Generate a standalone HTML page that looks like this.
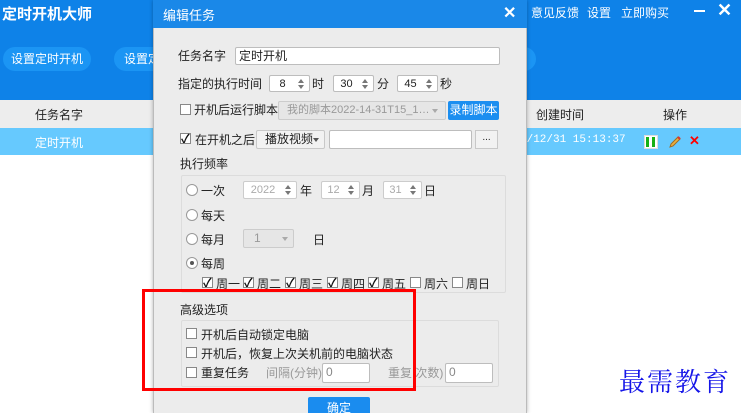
<!DOCTYPE html>
<html><head><meta charset="utf-8"><style>
*{margin:0;padding:0;box-sizing:border-box}
html,body{width:741px;height:413px;overflow:hidden}
body{position:relative;background:#fff;font-family:"Liberation Sans","Noto Sans CJK SC",sans-serif;font-size:12px;color:#222}
.a{position:absolute;white-space:nowrap}
.w{color:#fff}
.inp{position:absolute;background:#fff;border:1px solid #bdbdbd;border-radius:2px;font-size:12px;line-height:16px;padding-left:3px}
.spin{position:absolute;background:#fff;border:1px solid #bdbdbd;border-radius:2px;font-size:11px;text-align:center;line-height:16px}
.spin.d{color:#aaa;border-color:#ccc}
.spin:after{content:"";position:absolute;right:5px;top:3px;width:0;height:0;border-left:3px solid transparent;border-right:3px solid transparent;border-bottom:4px solid #777}
.spin:before{content:"";position:absolute;right:5px;top:9px;width:0;height:0;border-left:3px solid transparent;border-right:3px solid transparent;border-top:4px solid #777}
.cb{position:absolute;width:11px;height:11px;border:1px solid #888;background:#fff}
.cb.k:after{content:"✓";position:absolute;left:0;top:-4px;font-size:12px;font-weight:bold;color:#111}
.rd{position:absolute;width:12px;height:12px;border:1px solid #999;border-radius:50%;background:#fff}
.rd.k:after{content:"";position:absolute;left:3px;top:3px;width:4px;height:4px;border-radius:50%;background:#555}
.grp{position:absolute;border:1px solid #dcdcdc;border-radius:2px}
</style></head><body>
<div class="a" style="left:0;top:0;width:741px;height:100px;background:#0e82e8"></div>
<div class="a w" style="left:2px;top:3px;font-size:15px;font-weight:bold">定时开机大师</div>
<div class="a" style="left:3px;top:47px;width:88px;height:24px;border-radius:12px;background:#1b95f4;color:#fff;text-align:center;line-height:24px">设置定时开机</div>
<div class="a" style="left:114px;top:47px;width:88px;height:24px;border-radius:12px;background:#1b95f4;color:#fff;line-height:24px;padding-left:10px">设置定时开机</div>
<div class="a" style="left:500px;top:47px;width:36px;height:24px;border-radius:12px;background:#1b95f4"></div>
<div class="a w" style="left:531px;top:4px;font-size:12px">意见反馈</div>
<div class="a w" style="left:587px;top:4px">设置</div>
<div class="a w" style="left:621px;top:4px">立即购买</div>
<div class="a" style="left:694px;top:10px;width:11px;height:2px;background:#fff"></div>
<div class="a w" style="left:717px;top:0px;font-size:18px;font-weight:bold">✕</div>
<div class="a" style="left:0;top:100px;width:741px;height:28px;background:#ededed"></div>
<div class="a" style="left:35px;top:106px">任务名字</div>
<div class="a" style="left:536px;top:106px">创建时间</div>
<div class="a" style="left:663px;top:106px">操作</div>
<div class="a" style="left:0;top:128px;width:741px;height:27px;background:#66c9fe"></div>
<div class="a w" style="left:35px;top:134px">定时开机</div>
<div class="a w" style="left:520px;top:134px;font-family:'Liberation Mono',monospace;font-size:11px">2/12/31 15:13:37</div>
<div class="a" style="left:644px;top:135px;width:14px;height:14px;background:#fff;border:1px solid #ddd"></div>
<div class="a" style="left:646px;top:137px;width:3px;height:10px;background:#16b016"></div>
<div class="a" style="left:652px;top:137px;width:3px;height:10px;background:#16b016"></div>
<svg class="a" style="left:668px;top:135px" width="14" height="14"><path d="M2 12 L3 9 L10 2 L12 4 L5 11 Z" fill="#e8b040" stroke="#a06a20" stroke-width="1"/><path d="M10 2 L12 4" stroke="#d33" stroke-width="2"/></svg>
<div class="a" style="left:689px;top:133px;color:#f00;font-size:13px;font-weight:bold">✕</div>
<div class="a" style="left:619px;top:362px;color:#1515e8;font-size:26px;font-family:'Noto Serif CJK SC',serif;letter-spacing:2px">最需教育</div>
<div class="a" style="left:153px;top:0;width:374px;height:413px;background:#ececec;border-left:1px solid #bbb;border-right:1px solid #bbb;box-shadow:0 0 4px rgba(0,0,0,.3)"></div>
<div class="a" style="left:153px;top:0;width:374px;height:28px;background:#1a88e8"></div>
<div class="a w" style="left:163px;top:5px;font-size:13px">编辑任务</div>
<div class="a w" style="left:503px;top:3px;font-size:16px;font-weight:bold">✕</div>

<div class="a" style="left:178px;top:47px">任务名字</div>
<div class="inp" style="left:235px;top:47px;width:265px;height:18px">定时开机</div>
<div class="a" style="left:178px;top:75px">指定的执行时间</div>
<div class="spin" style="left:269px;top:75px;width:41px;height:17px;padding-right:14px">8</div><div class="a" style="left:312px;top:75px">时</div>
<div class="spin" style="left:333px;top:75px;width:41px;height:17px;padding-right:14px">30</div><div class="a" style="left:377px;top:75px">分</div>
<div class="spin" style="left:397px;top:75px;width:41px;height:17px;padding-right:14px">45</div><div class="a" style="left:440px;top:75px">秒</div>

<div class="cb" style="left:180px;top:104px"></div>
<div class="a" style="left:194px;top:101px">开机后运行脚本</div>
<div class="a" style="left:278px;top:101px;width:168px;height:19px;border:1px solid #ccc;background:#e6e6e6;color:#999;font-size:11px;line-height:17px;padding-left:8px;border-radius:2px">我的脚本2022-14-31T15_1…</div>
<div class="a" style="left:432px;top:109px;border-left:3px solid transparent;border-right:3px solid transparent;border-top:4px solid #aaa"></div>
<div class="a" style="left:448px;top:101px;width:51px;height:19px;background:#1b8ef0;color:#fff;text-align:center;line-height:19px;border-radius:2px">录制脚本</div>

<div class="cb k" style="left:180px;top:133px"></div>
<div class="a" style="left:195px;top:131px">在开机之后</div>
<div class="a" style="left:256px;top:130px;width:69px;height:19px;border:1px solid #c8c8c8;background:#f2f2f2;line-height:17px;padding-left:8px;border-radius:2px">播放视频</div>
<div class="a" style="left:313px;top:138px;border-left:3px solid transparent;border-right:3px solid transparent;border-top:4px solid #555"></div>
<div class="inp" style="left:329px;top:130px;width:143px;height:19px"></div>
<div class="a" style="left:475px;top:130px;width:23px;height:19px;border:1px solid #c8c8c8;background:#f2f2f2;text-align:center;line-height:14px;font-size:10px">...</div>

<div class="a" style="left:180px;top:155px">执行频率</div>
<div class="grp" style="left:181px;top:175px;width:325px;height:118px"></div>
<div class="rd" style="left:186px;top:184px"></div><div class="a" style="left:201px;top:182px">一次</div>
<div class="spin d" style="left:243px;top:181px;width:54px;height:18px;padding-right:14px">2022</div><div class="a" style="left:300px;top:182px">年</div>
<div class="spin d" style="left:321px;top:181px;width:39px;height:18px;padding-right:14px">12</div><div class="a" style="left:362px;top:182px">月</div>
<div class="spin d" style="left:383px;top:181px;width:39px;height:18px;padding-right:14px">31</div><div class="a" style="left:424px;top:182px">日</div>
<div class="rd" style="left:186px;top:209px"></div><div class="a" style="left:201px;top:207px">每天</div>
<div class="rd" style="left:186px;top:233px"></div><div class="a" style="left:201px;top:231px">每月</div>
<div class="a" style="left:243px;top:229px;width:51px;height:19px;border:1px solid #ccc;background:#e6e6e6;color:#999;line-height:17px;padding-left:10px;border-radius:2px">1</div>
<div class="a" style="left:282px;top:237px;border-left:3px solid transparent;border-right:3px solid transparent;border-top:4px solid #aaa"></div>
<div class="a" style="left:313px;top:231px">日</div>
<div class="rd k" style="left:186px;top:257px"></div><div class="a" style="left:201px;top:255px">每周</div>
<div class="cb k" style="left:202px;top:277px"></div><div class="a" style="left:216px;top:275px">周一</div>
<div class="cb k" style="left:243px;top:277px"></div><div class="a" style="left:257px;top:275px">周二</div>
<div class="cb k" style="left:285px;top:277px"></div><div class="a" style="left:299px;top:275px">周三</div>
<div class="cb k" style="left:327px;top:277px"></div><div class="a" style="left:341px;top:275px">周四</div>
<div class="cb k" style="left:368px;top:277px"></div><div class="a" style="left:382px;top:275px">周五</div>
<div class="cb" style="left:410px;top:277px"></div><div class="a" style="left:424px;top:275px">周六</div>
<div class="cb" style="left:452px;top:277px"></div><div class="a" style="left:466px;top:275px">周日</div>

<div class="a" style="left:180px;top:301px">高级选项</div>
<div class="grp" style="left:181px;top:320px;width:318px;height:67px"></div>
<div class="cb" style="left:186px;top:328px"></div><div class="a" style="left:201px;top:326px">开机后自动锁定电脑</div>
<div class="cb" style="left:186px;top:347px"></div><div class="a" style="left:201px;top:345px">开机后，恢复上次关机前的电脑状态</div>
<div class="cb" style="left:186px;top:367px"></div><div class="a" style="left:201px;top:364px">重复任务</div>
<div class="a" style="left:266px;top:364px;color:#999">间隔(分钟)</div>
<div class="inp" style="left:322px;top:363px;width:48px;height:20px;color:#888">0</div>
<div class="a" style="left:388px;top:364px;color:#999">重复 次数)</div>
<div class="inp" style="left:445px;top:363px;width:48px;height:20px;color:#888">0</div>
<div class="a" style="left:142px;top:289px;width:274px;height:102px;border:3px solid #f00"></div>
<div class="a" style="left:308px;top:397px;width:62px;height:22px;background:#1a8cef;border-radius:2px;color:#fff;text-align:center;line-height:22px">确定</div>
</body></html>
